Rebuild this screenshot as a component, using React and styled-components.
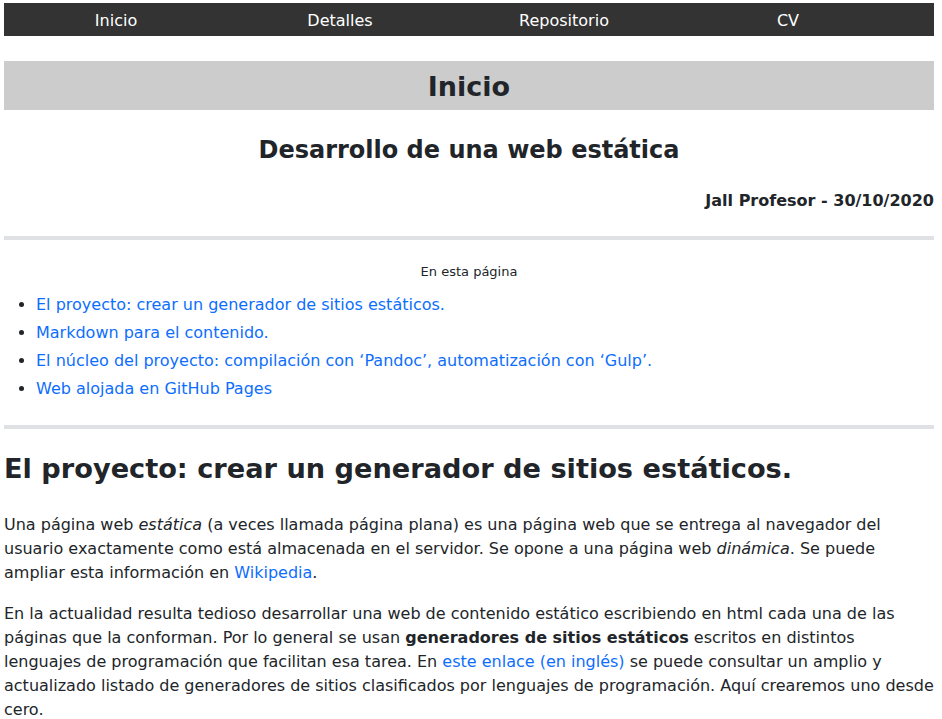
import React from "react";
import styled, { createGlobalStyle } from "styled-components";

const GlobalStyle = createGlobalStyle`
  html, body { margin: 0; padding: 0; background: #fff; }
  body {
    font-family: "DejaVu Sans", "Liberation Sans", sans-serif;
    font-size: 16px;
    line-height: 1.5;
    color: #212529;
  }
`;

const Page = styled.div`
  padding: 3px 8px 0 4px;
`;

const NavBar = styled.nav`
  display: flex;
  background: #333333;
  height: 33px;
  box-sizing: border-box;
  padding-top: 2px;
`;

const NavItem = styled.a`
  flex: 0 0 224px;
  text-align: center;
  color: #ffffff;
  text-decoration: none;
  line-height: 31px;
  font-size: 16px;
`;

const TitleBar = styled.h1`
  margin: 25px 0 0;
  background: #cccccc;
  text-align: center;
  font-size: 27px;
  font-weight: bold;
  box-sizing: border-box;
  height: 49px;
  padding-top: 2px;
  line-height: 47px;
`;

const Subtitle = styled.h2`
  margin: 25px 0 0;
  text-align: center;
  font-size: 24px;
  font-weight: bold;
  line-height: 30px;
`;

const Author = styled.p`
  margin: 24px 0 0;
  text-align: right;
  font-size: 16px;
  font-weight: bold;
  line-height: 24px;
`;

const Rule = styled.hr`
  margin: ${(p) => p.$top}px 0 0;
  border: 0;
  height: 4px;
  background: #dfe1e5;
`;

const Toc = styled.div`
  margin-top: 22px;
`;

const TocTitle = styled.p`
  margin: 0;
  text-align: center;
  font-size: 13px;
  line-height: 20px;
`;

const TocList = styled.ul`
  margin: 9px 0 0;
  padding-left: 32px;
`;

const TocItem = styled.li`
  line-height: 28px;
`;

const Link = styled.a`
  color: #0d6efd;
  text-decoration: none;
`;

const SectionTitle = styled.h2`
  margin: 22px 0 0;
  font-size: 27.2px;
  font-weight: bold;
  line-height: 36px;
`;

const Para = styled.p`
  margin: ${(p) => p.$top}px 0 0;
  line-height: 24px;
`;

const navItems = ["Inicio", "Detalles", "Repositorio", "CV"];
const tocItems = [
  "El proyecto: crear un generador de sitios estáticos.",
  "Markdown para el contenido.",
  "El núcleo del proyecto: compilación con ‘Pandoc’, automatización con ‘Gulp’.",
  "Web alojada en GitHub Pages",
];

export default function App() {
  return (
    <>
      <GlobalStyle />
      <Page>
        <NavBar>
          {navItems.map((n) => (
            <NavItem key={n} href="#">
              {n}
            </NavItem>
          ))}
        </NavBar>
        <TitleBar>Inicio</TitleBar>
        <Subtitle>Desarrollo de una web estática</Subtitle>
        <Author>Jall Profesor - 30/10/2020</Author>
        <Rule $top={23} />
        <Toc>
          <TocTitle>En esta página</TocTitle>
          <TocList>
            {tocItems.map((t) => (
              <TocItem key={t}>
                <Link href="#">{t}</Link>
              </TocItem>
            ))}
          </TocList>
        </Toc>
        <Rule $top={22} />
        <SectionTitle>El proyecto: crear un generador de sitios estáticos.</SectionTitle>
        <Para $top={26}>
          Una página web <em>estática</em> (a veces llamada página plana) es una página web que se
          entrega al navegador del usuario exactamente como está almacenada en el servidor. Se opone
          a una página web <em>dinámica</em>. Se puede ampliar esta información en{" "}
          <Link href="#">Wikipedia</Link>.
        </Para>
        <Para $top={17}>
          En la actualidad resulta tedioso desarrollar una web de contenido estático escribiendo en
          html cada una de las páginas que la conforman. Por lo general se usan{" "}
          <strong>generadores de sitios estáticos</strong> escritos en distintos lenguajes de
          programación que facilitan esa tarea. En <Link href="#">este enlace (en inglés)</Link> se
          puede consultar un amplio y actualizado listado de generadores de sitios clasificados por
          lenguajes de programación. Aquí crearemos uno desde cero.
        </Para>
      </Page>
    </>
  );
}
